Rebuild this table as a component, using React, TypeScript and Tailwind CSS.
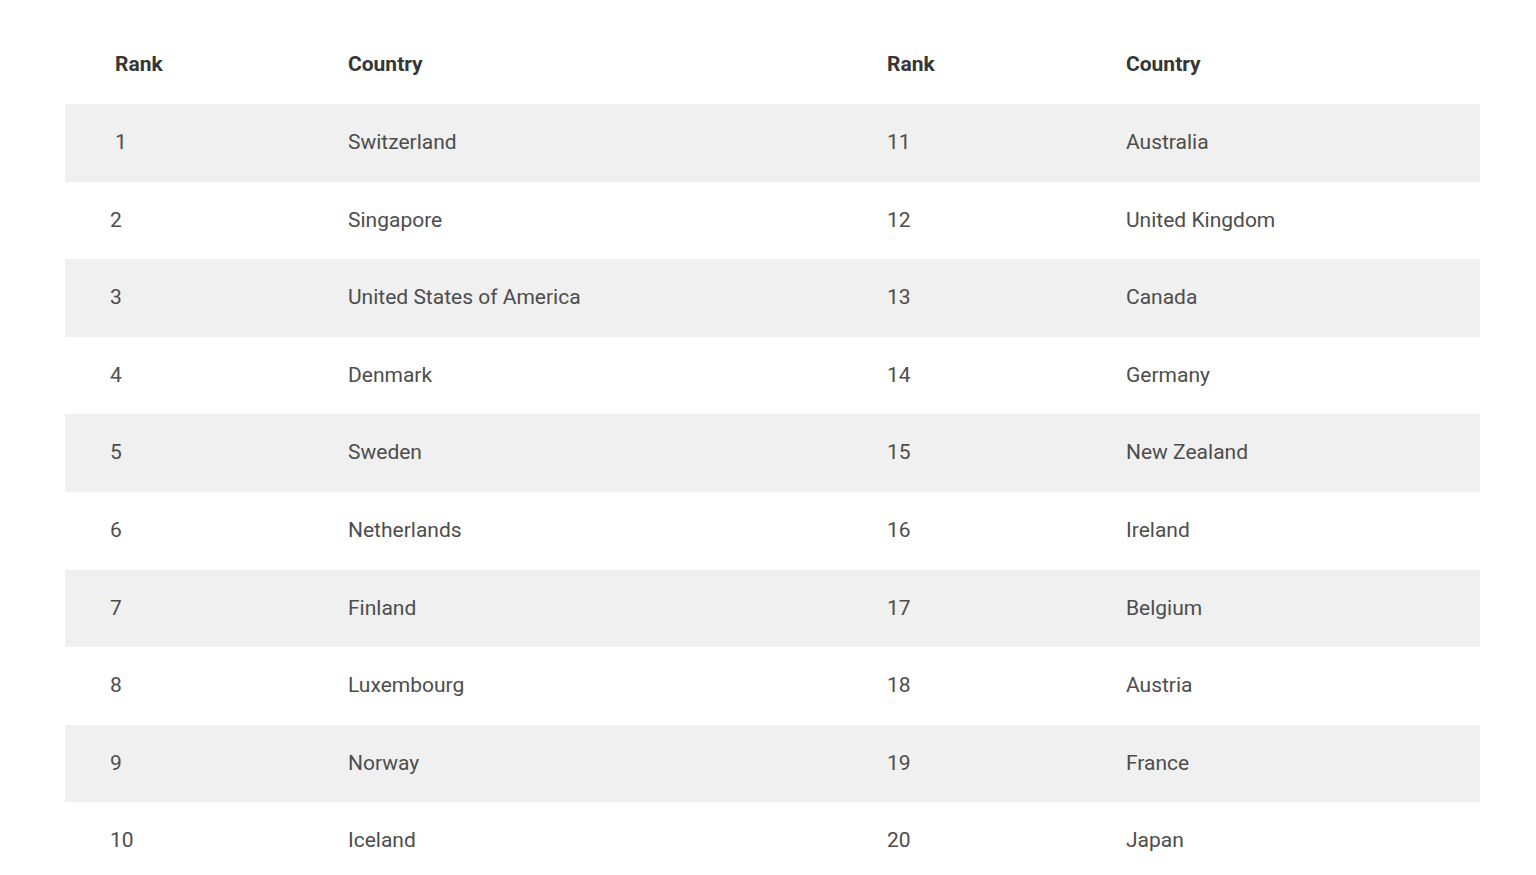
import React, { FC } from 'react';

const rows: [string, string, string, string][] = [
	['1', 'Switzerland', '11', 'Australia'],
	['2', 'Singapore', '12', 'United Kingdom'],
	['3', 'United States of America', '13', 'Canada'],
	['4', 'Denmark', '14', 'Germany'],
	['5', 'Sweden', '15', 'New Zealand'],
	['6', 'Netherlands', '16', 'Ireland'],
	['7', 'Finland', '17', 'Belgium'],
	['8', 'Luxembourg', '18', 'Austria'],
	['9', 'Norway', '19', 'France'],
	['10', 'Iceland', '20', 'Japan'],
];

const App: FC = () => {
	return (
		<div className="w-full h-[875px] overflow-hidden bg-white pt-[25px] font-['Roboto',sans-serif]">
			<div className="ml-[65px] w-[1415px]">
				<div className="grid grid-cols-[238px_539px_239px_399px] h-[79px] items-center text-[21px] font-bold text-[#363636]">
					<div className="pl-[50px]">Rank</div>
					<div className="pl-[45px]">Country</div>
					<div className="pl-[45px]">Rank</div>
					<div className="pl-[45px]">Country</div>
				</div>
				{rows.map((r, i) => (
					<div
						key={r[0]}
						className={`grid grid-cols-[238px_539px_239px_399px] h-[77.6px] items-center text-[21px] text-[#4d4d4d] ${
							i % 2 === 0 ? 'bg-[#f0f0f0]' : 'bg-white'
						}`}
					>
						<div className={i === 0 ? 'pl-[50px]' : 'pl-[45px]'}>{r[0]}</div>
						<div className="pl-[45px]">{r[1]}</div>
						<div className="pl-[45px]">{r[2]}</div>
						<div className="pl-[45px]">{r[3]}</div>
					</div>
				))}
			</div>
		</div>
	);
};

export default App;
